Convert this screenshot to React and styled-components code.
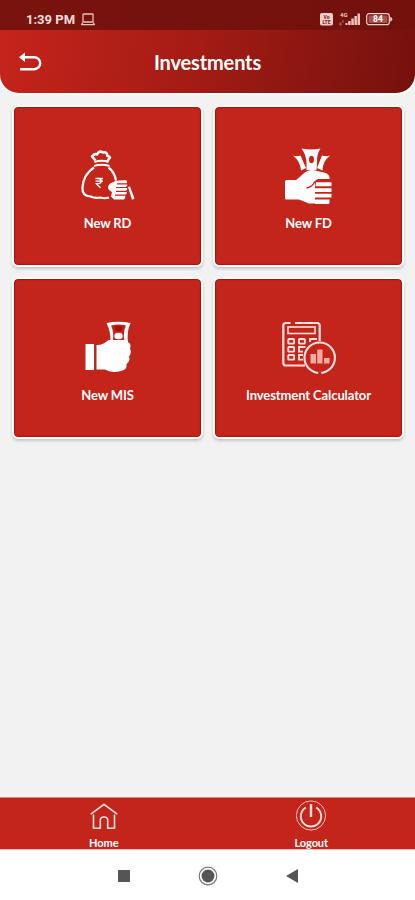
import styled, { createGlobalStyle } from 'styled-components';

const GlobalStyle = createGlobalStyle`
  * { box-sizing: border-box; }
  body {
    margin: 0;
    background: #f2f2f2;
    font-family: Lato, "Open Sans", sans-serif;
  }
  svg { display: block; }
`;

const Screen = styled.div`
  width: 415px;
  height: 900px;
  display: flex;
  flex-direction: column;
  background: #f2f2f2;
  overflow: hidden;
`;

const StatusBar = styled.div`
  height: 30px;
  padding: 8px 22px 0 26px;
  display: flex;
  justify-content: space-between;
  align-items: flex-start;
  background: linear-gradient(90deg, #78130e, #73110c);
  color: #f6dedb;
`;

const StatusGroup = styled.div`
  display: flex;
  align-items: center;
  height: 22px;
  gap: ${props => props.gap};
`;

const Time = styled.span`
  font-family: Roboto, sans-serif;
  font-size: 13px;
  font-weight: 700;
`;

const Header = styled.div`
  height: 62.5px;
  flex: none;
  display: grid;
  grid-template-columns: 60px 1fr 60px;
  align-items: center;
  padding-top: 1px;
  border-radius: 0 0 19px 19px;
  background: linear-gradient(100deg, #c5241b 0%, #a51c15 45%, #75110d 100%);
  box-shadow: 0 0 0 2px #fff;
  clip-path: inset(0 0 -3px 0);
`;

const BackButton = styled.div`
  padding-left: 19px;
`;

const Title = styled.div`
  text-align: center;
  font-size: 20px;
  font-weight: 700;
  line-height: 24px;
  letter-spacing: -0.15px;
  color: #fff;
`;

const Grid = styled.div`
  flex: 1;
  display: grid;
  grid-template-columns: 191px 191px;
  grid-auto-rows: 162px;
  align-content: start;
  gap: 10px;
  padding: 12px 0 0 12px;
`;

const Card = styled.div`
  display: flex;
  flex-direction: column;
  align-items: center;
  padding-top: 37px;
  border: 2px solid #fff;
  border-radius: 6px;
  background: #c3251b;
  background-clip: padding-box;
  box-shadow: 0 2px 3px rgba(0, 0, 0, 0.18), inset 0 0 1px 1px rgba(150, 10, 5, 0.6);
`;

const CardLabel = styled.div`
  margin-top: 1px;
  font-size: 13px;
  font-weight: 700;
  line-height: 16px;
  letter-spacing: -0.1px;
  color: #fff;
`;

const TabBar = styled.div`
  height: 53px;
  display: grid;
  grid-template-columns: 1fr 1fr;
  background: #c3251b;
  border-top: 1px solid #d98a85;
  border-bottom: 1px solid #f0b9b5;
`;

const Tab = styled.div`
  display: flex;
  flex-direction: column;
  align-items: center;
  padding-top: 2px;
  font-size: 11px;
  font-weight: 700;
  line-height: 14px;
  letter-spacing: -0.1px;
  color: #fff;
  svg { margin-bottom: 4px; }
`;

const NavBar = styled.div`
  height: 50px;
  display: flex;
  justify-content: center;
  align-items: center;
  gap: 68px;
  padding-top: 1px;
  background: #fff;
`;

const Laptop = () => (
  <svg width="14" height="13" viewBox="0 0 14 13" fill="none" stroke="#e9c2bd" strokeWidth="1.3">
    <rect x="2" y="1" width="10" height="8" rx="0.6" />
    <path d="M1.6 9.5L.7 11.6H13.3L12.4 9.5" />
  </svg>
);

const VolteBadge = () => (
  <svg width="13" height="13" viewBox="0 0 13 13">
    <rect width="13" height="12.5" rx="1.8" fill="#f0cdc9" />
    <text x="6.5" y="5.7" textAnchor="middle" fontSize="5" fontWeight="700" fontFamily="Roboto" fill="#7a1a15">Vo</text>
    <text x="6.5" y="11" textAnchor="middle" fontSize="5" fontWeight="700" fontFamily="Roboto" fill="#7a1a15">LTE</text>
  </svg>
);

const Signal = () => (
  <svg width="23" height="14" viewBox="0 0 23 14" fill="#edc6c2">
    <text x="2" y="5" fontSize="6" fontWeight="700" fontFamily="Roboto">4G</text>
    <path d="M1.5 10.5h2v3h-2zM4.5 8h1v3h-1z" opacity="0.45" />
    <path d="M7.5 11h2v2h-2zM10.2 9h2.5v4h-2.5zM13.3 6.5h2.5v6.5h-2.5zM16.4 4h2.5v9h-2.5zM19.5 1.5H22V13h-2.5z" />
  </svg>
);

const Battery = () => (
  <svg width="27" height="13" viewBox="0 0 27 13">
    <rect x="0.7" y="0.7" width="22.6" height="11" rx="2.5" fill="none" stroke="#efd0cc" strokeWidth="1.2" />
    <path d="M24.2 3.7Q26.3 4.5 26.3 6.2T24.2 8.7z" fill="#efd0cc" />
    <rect x="2.5" y="2.4" width="19" height="7.6" rx="1" fill="#a9524c" />
    <text x="12" y="9.3" textAnchor="middle" fontSize="8.5" fontWeight="700" fontFamily="Roboto" fill="#fff">84</text>
  </svg>
);

const BackArrow = () => (
  <svg width="23" height="20" viewBox="0 0 23 20" fill="none" stroke="#fff" strokeWidth="2.4">
    <path d="M2 5.2H15.2A6 6 0 0 1 15.2 17.2H1" />
    <path d="M6 .4L0 5.2L6 10z" fill="#fff" stroke="none" />
  </svg>
);

const MoneyBag = () => (
  <svg width="56" height="70" viewBox="0 0 56 70" fill="none" stroke="#fff" strokeWidth="2" strokeLinejoin="round">
    <path d="M15.5 16.5L12 12.5Q14.5 9 17 10.500Q19 6 23 8.500Q27 7.500 27.500 12Q29 12 30 13.500L27 17.500" strokeWidth="2.600" />
    <path d="M14.500 18Q21.500 15.500 28.500 18M14 22Q21.500 19.500 29.500 22" strokeWidth="2" />
    <path d="M14 23.500C7 28 3 36 2.500 43.500Q2 52 10.500 52.500Q15 54.500 20 53.500Q25 55 29 53.500M28.500 23.500Q34.500 28 36 36.500" strokeWidth="2.200" />
    <path d="M15.500 34.500H23M15.500 37.200H23M16 34.500H18Q21.200 34.500 21.200 37T18 39.600H16L20.500 43.800" strokeWidth="1.300" />
    <g stroke="none" fill="#fff">
      <path d="M28.500 41.500Q30 38.500 34 38L35 36.800L46 36.300Q48 37.500 46.500 39.300L47.500 41L46 43L47.500 45L46 47L47 49L45.500 51L45 54.500L43.500 55.500H34L31 52.500L32 48Q27 46 28.500 41.500z" />
      <path d="M48 43L50 42.500L54.500 54.500L52 55.800z" />
    </g>
    <path d="M37 39.800H48M36 43.500H48M36 47.300H48M35 51.200H48" stroke="#c3251b" strokeWidth="1.200" />
  </svg>
);

const FistWithNotes = () => (
  <svg width="56" height="70" viewBox="0 0 56 70" fill="#fff">
    <path d="M12 11.500Q16.500 12.500 19.500 11.500L25 24L20 26.500Q19.500 17.500 12 11.500z" />
    <path d="M49 11.500Q44.500 12.500 41 11.500L36 24L41.500 26.500Q41.500 17.500 49 11.500z" />
    <path d="M20.500 4.500Q30 6.500 39.500 4.500Q35.500 10.500 36 18.500L35.500 26H25.500V18.500Q25 10.500 20.500 4.500z" />
    <ellipse cx="30.500" cy="15.500" rx="2.500" ry="3.700" fill="#c3251b" />
    <path d="M4 37.500Q4 36 5.500 36H15Q19 33 22 30Q27 25.500 33 26.200L45 29Q49 31 48.500 35H37Q33.500 36 34 41V59.500H28L18 55.500H5.500Q4 55.500 4 54z" />
    <path d="M25.500 44Q32 42.500 33.500 38Q35.500 36.600 38 36.400H48" stroke="#c3251b" strokeWidth="1.300" fill="none" />
    <path d="M35 38.200H50.500V42.300H34.500zM34 44.200H50.500V47.900H34zM34 49.800H50.500V53.600H34zM34 55.500H48.500V58.500Q48.500 60 47 60H34z" />
  </svg>
);

const HandWithNote = () => (
  <svg width="56" height="70" viewBox="0 0 56 70" fill="#fff">
    <path d="M5.500 28H14V54H5.500z" />
    <path d="M16.500 29Q22 29.500 28 24.500Q31 22.500 33 25.500H47Q52 27.500 50 32.500Q52 36.500 49 40.500Q50.500 45 46.500 48Q47.500 53.500 41 55Q31 57.500 25 53.500H16.500z" />
    <path d="M26.500 7Q38.500 4.500 50.500 7Q46.500 16 48 26H30.500Q31 16 26.500 7z" />
    <path d="M31 9.500Q38.500 7.500 46 9.500Q43 16 44.200 24H33Q34 16 31 9.500z" fill="#c3251b" />
    <path d="M34.500 11Q38.500 8.500 42.500 11L41.500 14.500L38.500 15.500L35.500 14.500z" fill="#a90d06" />
    <ellipse cx="38.500" cy="20" rx="4.200" ry="3.200" />
  </svg>
);

const Calculator = () => (
  <svg width="56" height="70" viewBox="0 0 56 70" fill="none" stroke="#ffe3e0" strokeWidth="2.200">
    <path d="M24 49.500H5Q2.300 49.500 2.300 47V9.500Q2.300 7 5 7H9.500M14 7H36Q38.700 7 38.700 9.500V25" />
    <rect x="7" y="11" width="27" height="6.500" strokeWidth="1.600" />
    <g strokeWidth="1.900">
      <rect x="7.300" y="23" width="5.800" height="4.600" rx="0.700" />
      <rect x="18" y="23" width="5.800" height="4.600" rx="0.700" />
      <path d="M35 24V23H29V26" />
      <rect x="7.300" y="31" width="5.800" height="4.600" rx="0.700" />
      <path d="M24.500 31H18V35.600H22" />
      <rect x="7.300" y="39" width="5.800" height="4.600" rx="0.700" />
      <path d="M22 39H18V43.600H22" />
    </g>
    <circle cx="38.700" cy="41.700" r="15.200" strokeWidth="2.100" />
    <path d="M37.200 57H40.200" stroke="#c3251b" strokeWidth="3" />
    <path d="M29.500 38H35V47.500H29.500zM36.200 33.500H41.500V47.500H36.200zM43 42H48.500V47.500H43z" fill="#f3aaa5" stroke="none" />
  </svg>
);

const HomeIcon = () => (
  <svg width="30" height="32" viewBox="0 0 30 32" fill="none" stroke="#ffe2df" strokeWidth="1.600" strokeLinejoin="round">
    <path d="M1.800 14.200L15 4.400L28.200 14.200" />
    <path d="M4.500 14.500V28.200H11.300V20.200Q11.300 17 15 17T18.700 20.200V28.200H25.500V14.500" />
  </svg>
);

const PowerIcon = () => (
  <svg width="32" height="32" viewBox="0 0 32 32" fill="none" stroke="#ffe2df">
    <circle cx="16" cy="15.500" r="14.600" strokeWidth="1" opacity="0.8" />
    <path d="M10.800 7.500A10.200 10.200 0 1 0 21.200 7.500" strokeWidth="1.900" />
    <path d="M16 4V17" strokeWidth="2.400" />
  </svg>
);

const cards = [
  { label: 'New RD', icon: MoneyBag },
  { label: 'New FD', icon: FistWithNotes },
  { label: 'New MIS', icon: HandWithNote },
  { label: 'Investment Calculator', icon: Calculator },
];

function App() {
  return (
    <>
      <GlobalStyle />
      <Screen>
        <StatusBar>
          <StatusGroup gap="6px">
            <Time>1:39 PM</Time>
            <Laptop />
          </StatusGroup>
          <StatusGroup gap="5px">
            <VolteBadge />
            <Signal />
            <Battery />
          </StatusGroup>
        </StatusBar>
        <Header>
          <BackButton><BackArrow /></BackButton>
          <Title>Investments</Title>
        </Header>
        <Grid>
          {cards.map(({ label, icon: Icon }) => (
            <Card key={label}>
              <Icon />
              <CardLabel>{label}</CardLabel>
            </Card>
          ))}
        </Grid>
        <TabBar>
          <Tab><HomeIcon />Home</Tab>
          <Tab><PowerIcon />Logout</Tab>
        </TabBar>
        <NavBar>
          <svg width="12" height="12"><rect width="12" height="12" fill="#555" /></svg>
          <svg width="20" height="20">
            <circle cx="10" cy="10" r="8.8" fill="none" stroke="#777" strokeWidth="1.2" />
            <circle cx="10" cy="10" r="6.5" fill="#555" />
          </svg>
          <svg width="12" height="14"><path d="M12 0V14L0 7z" fill="#555" /></svg>
        </NavBar>
      </Screen>
    </>
  );
}

export default App;
